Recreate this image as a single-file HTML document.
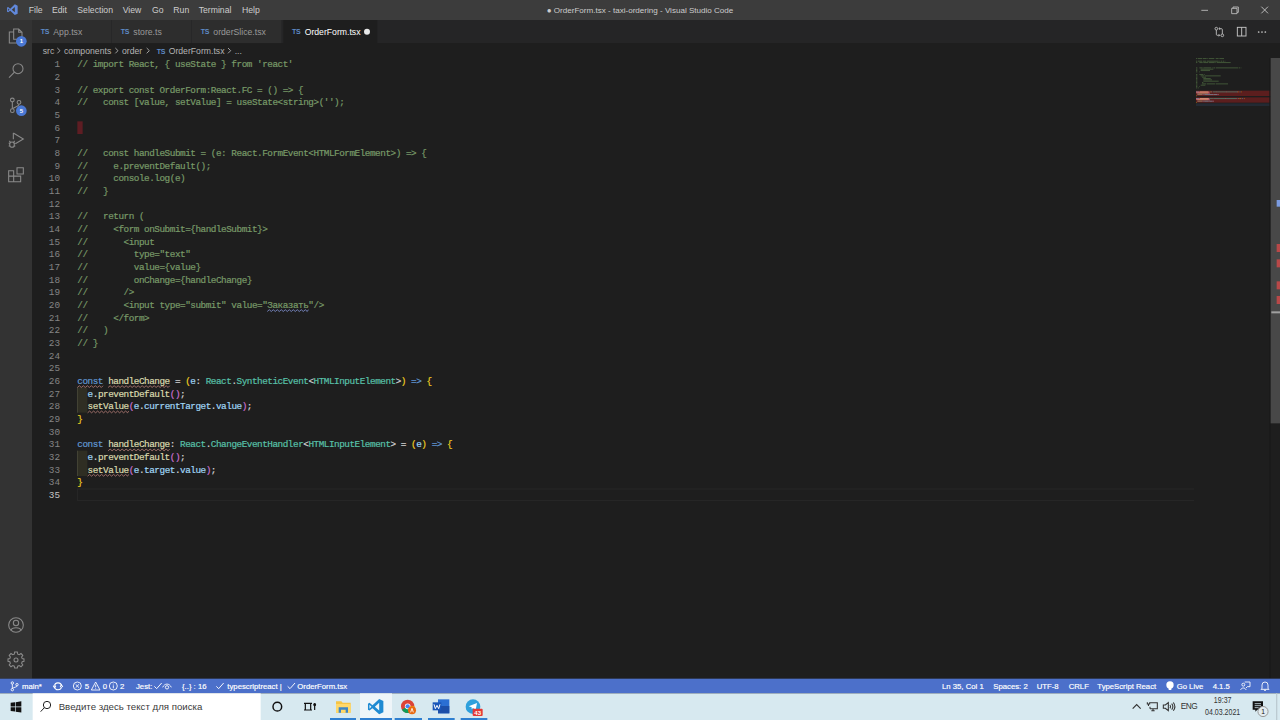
<!DOCTYPE html>
<html><head><meta charset="utf-8">
<style>
html,body{margin:0;padding:0;width:1280px;height:720px;overflow:hidden;background:#1e1e1e;}
#s{position:absolute;left:0;top:0;width:1920px;height:1080px;transform:scale(0.6666667);transform-origin:0 0;font-family:"Liberation Sans",sans-serif;overflow:hidden;background:#1e1e1e;}
.a{position:absolute;}
svg{position:absolute;overflow:visible;}
#title{left:0;top:0;width:1920px;height:30px;background:#3c3c3c;color:#cccccc;font-size:13px;}
.menu{position:absolute;top:0;line-height:32px;color:#cccccc;}
#act{left:0;top:30px;width:48px;height:988px;background:#333333;}
.badge{position:absolute;width:16px;height:16px;border-radius:50%;background:#4a78d4;color:#fff;font-size:9px;line-height:16px;text-align:center;font-weight:bold;}
#tabs{left:48px;top:30px;width:1872px;height:35px;background:#252526;}
.tab{position:absolute;top:0;height:35px;background:#2d2d2d;color:#9a9a9a;font-size:13px;line-height:36px;}
.ts{position:absolute;font-size:10.5px;font-weight:bold;color:#5f8ac6;letter-spacing:-0.3px;}
#bc{left:48px;top:65px;width:1872px;height:22px;background:#1e1e1e;color:#b4b4b4;font-size:13px;line-height:23px;}
#bc span{position:absolute;top:0;}
#ed{left:48px;top:87px;width:1872px;height:931px;background:#1e1e1e;}
.ln{position:absolute;left:0;width:42px;margin-top:0.5px;text-align:right;height:19px;line-height:19px;font-family:"Liberation Mono",monospace;font-size:14px;color:#858585;}
.ln.act{color:#c6c6c6;}
.cl{position:absolute;left:68px;margin-top:0.5px;height:19px;line-height:19px;font-family:"Liberation Mono",monospace;font-size:14px;letter-spacing:-0.7px;color:#d4d4d4;white-space:pre;-webkit-text-stroke:0.3px currentColor;}
.c{color:#789a68}.k{color:#6198d4}.f{color:#dadaae}.v{color:#a0d6f6}.t{color:#58c0a8}.y{color:#f0cf20}.p{color:#cc70d0}.w{color:#d4d4d4}
#status{left:0;top:1018px;width:1920px;height:22px;background:#4c70ca;color:#ffffff;font-size:11.6px;line-height:23.5px;}
#status span{position:absolute;top:0;white-space:pre;-webkit-text-stroke:0.25px #fff;}
#task{left:0;top:1040px;width:1920px;height:40px;background:#d7e9f0;}
</style></head><body>
<div id="s">
 <div id="title" class="a">
  <svg style="left:10px;top:6px" width="17" height="17" viewBox="0 0 16 16"><path d="M11.5 0.5 L15.5 2.4 V13.6 L11.5 15.5 L5 9.4 L2 11.8 L0.6 11 V5 L2 4.2 L5 6.6 Z M11.5 4.3 L7.3 8 L11.5 11.7 Z M2.1 6.2 V9.8 L4 8 Z" fill="#6189dc" fill-rule="evenodd"/></svg>
  <span class="menu" style="left:43px">File</span>
  <span class="menu" style="left:78px">Edit</span>
  <span class="menu" style="left:116px">Selection</span>
  <span class="menu" style="left:184px">View</span>
  <span class="menu" style="left:228px">Go</span>
  <span class="menu" style="left:260px">Run</span>
  <span class="menu" style="left:298px">Terminal</span>
  <span class="menu" style="left:363px">Help</span>
  <span class="menu" style="left:0;width:1920px;text-align:center;font-size:12.1px;line-height:33px">● OrderForm.tsx - taxi-ordering - Visual Studio Code</span>
  <svg style="left:1792px;top:0" width="30" height="30" viewBox="0 0 30 30"><path d="M10 15.5 H20" stroke="#cccccc" stroke-width="1.2"/></svg>
  <svg style="left:1837px;top:0" width="30" height="30" viewBox="0 0 30 30"><path d="M10.5 12.5 h8 v8 h-8 z M12.5 12.5 v-2 h8 v8 h-2" stroke="#cccccc" stroke-width="1.2" fill="none"/></svg>
  <svg style="left:1882px;top:0" width="30" height="30" viewBox="0 0 30 30"><path d="M10 10 L20 20 M20 10 L10 20" stroke="#cccccc" stroke-width="1.3"/></svg>
 </div>
 <div id="act" class="a">
  <svg style="left:12px;top:12px" width="24" height="24" viewBox="0 0 24 24" fill="none" stroke="#8a8a8a" stroke-width="1.6"><path d="M8.5 1.5 H16 L21 6.5 V17 H8.5 Z M16 1.5 V6.5 H21"/><path d="M8.5 6 H2 V22.5 H14 V17"/></svg>
  <div class="badge" style="left:24px;top:24px">1</div>
  <svg style="left:12px;top:64px" width="24" height="24" viewBox="0 0 24 24" fill="none" stroke="#8a8a8a" stroke-width="1.6"><circle cx="15" cy="9" r="7.5"/><path d="M9.7 14.3 L1.5 22.5"/></svg>
  <svg style="left:12px;top:116px" width="24" height="24" viewBox="0 0 24 24" fill="none" stroke="#8a8a8a" stroke-width="1.6"><circle cx="6.5" cy="4" r="2.8"/><circle cx="16.5" cy="7.5" r="2.8"/><circle cx="6.5" cy="20" r="2.8"/><path d="M6.5 6.8 V17.2 M16.5 10.3 C16.5 14 12 13.5 7 17"/></svg>
  <div class="badge" style="left:24px;top:128px">5</div>
  <svg style="left:12px;top:168px" width="24" height="24" viewBox="0 0 24 24" fill="none" stroke="#8a8a8a" stroke-width="1.6"><path d="M8 1.5 L23 10.5 L11 17.5"/><path d="M8 1.5 V11"/><ellipse cx="6" cy="19" rx="3.5" ry="4"/><path d="M1 17 H3 M1 21 H3 M9 17 H11 M9 21 H11 M3.5 15 L2 13.5 M8.5 15 L10 13.5"/></svg>
  <svg style="left:12px;top:220px" width="24" height="24" viewBox="0 0 24 24" fill="none" stroke="#8a8a8a" stroke-width="1.6"><path d="M1 6 H8.5 V22.5 H1 Z M1 14.2 H19 V22.5 H8.5"/><path d="M13.5 1.5 H23 V11 H13.5 Z"/></svg>
  <svg style="left:12px;top:895px" width="24" height="24" viewBox="0 0 24 24" fill="none" stroke="#8a8a8a" stroke-width="1.6"><circle cx="12" cy="12.5" r="11"/><circle cx="12" cy="9.5" r="4"/><path d="M4.5 20.5 C6 15.5 18 15.5 19.5 20.5"/></svg>
  <svg style="left:12px;top:948px" width="24" height="24" viewBox="0 0 24 24" fill="none" stroke="#8a8a8a" stroke-width="1.6"><path d="M10 1 H14 L14.6 4.2 L16.8 5.1 L19.5 3.3 L22.2 6 L20.4 8.7 L21.3 10.9 L24 11.5 V15 L21.3 15.6 L20.4 17.8 L22.2 20.5 L19.5 23.2 L16.8 21.4 L14.6 22.3 L14 25 H10 L9.4 22.3 L7.2 21.4 L4.5 23.2 L1.8 20.5 L3.6 17.8 L2.7 15.6 L0 15 V11.5 L2.7 10.9 L3.6 8.7 L1.8 6 L4.5 3.3 L7.2 5.1 L9.4 4.2 Z" transform="translate(0,-1) scale(1)"/><circle cx="12" cy="12" r="3"/></svg>
 </div>
 <div id="tabs" class="a">
  <div class="tab" style="left:0;width:119px"><span class="ts" style="left:13px;top:-1px">TS</span><span style="position:absolute;left:32px">App.tsx</span></div>
  <div class="tab" style="left:120px;width:119px"><span class="ts" style="left:13px;top:-1px">TS</span><span style="position:absolute;left:32px">store.ts</span></div>
  <div class="tab" style="left:240px;width:134px"><span class="ts" style="left:13px;top:-1px">TS</span><span style="position:absolute;left:32px">orderSlice.tsx</span></div>
  <div class="tab" style="left:377px;width:141px;background:#1e1e1e;color:#ffffff"><span class="ts" style="left:13px;top:-1px">TS</span><span style="position:absolute;left:32px">OrderForm.tsx</span><div style="position:absolute;left:121px;top:13px;width:9px;height:9px;border-radius:50%;background:#e8e8e8"></div></div>
  <svg style="left:1773px;top:10px" width="16" height="16" viewBox="0 0 16 16" fill="none" stroke="#c5c5c5" stroke-width="1.3"><circle cx="3.5" cy="3" r="2"/><circle cx="12.5" cy="13" r="2"/><path d="M3.5 5 V11.5 Q3.5 13 5 13 H8.5 M7 11.3 L8.7 13 L7 14.7 M12.5 11 V4.5 Q12.5 3 11 3 H7.5 M9 1.3 L7.3 3 L9 4.7"/></svg>
  <svg style="left:1807px;top:10px" width="16" height="16" viewBox="0 0 16 16" fill="none" stroke="#c5c5c5" stroke-width="1.4"><rect x="1" y="1" width="13" height="13"/><path d="M7.5 1 V14"/></svg>
  <svg style="left:1838px;top:10px" width="16" height="16" viewBox="0 0 16 16" fill="#c5c5c5"><circle cx="2" cy="8" r="1.3"/><circle cx="7" cy="8" r="1.3"/><circle cx="12" cy="8" r="1.3"/></svg>
 </div>
 <div id="bc" class="a">
  <span style="left:16px">src</span>
  <span style="left:48px">components</span>
  <span style="left:135px">order</span>
  <span class="ts" style="left:187px;top:1px;line-height:22px">TS</span>
  <span style="left:205px">OrderForm.tsx</span>
  <span style="left:304px">...</span>
  <svg style="left:33px;top:4px" width="14" height="14" viewBox="0 0 14 14" fill="none" stroke="#b4b4b4" stroke-width="1.3"><path d="M5 3 L9 7 L5 11"/></svg>
  <svg style="left:120px;top:4px" width="14" height="14" viewBox="0 0 14 14" fill="none" stroke="#b4b4b4" stroke-width="1.3"><path d="M5 3 L9 7 L5 11"/></svg>
  <svg style="left:167px;top:4px" width="14" height="14" viewBox="0 0 14 14" fill="none" stroke="#b4b4b4" stroke-width="1.3"><path d="M5 3 L9 7 L5 11"/></svg>
  <svg style="left:289px;top:4px" width="14" height="14" viewBox="0 0 14 14" fill="none" stroke="#b4b4b4" stroke-width="1.3"><path d="M5 3 L9 7 L5 11"/></svg>
 </div>
<div id="ed" class="a">
<div class="a" style="left:68px;top:95px;width:8px;height:19px;background:#5e1d23"></div>
<div class="a" style="left:68px;top:494px;width:15px;height:38px;background:#2f2e23;border-left:1.5px solid #505040;box-sizing:border-box"></div>
<div class="a" style="left:68px;top:589px;width:15px;height:38px;background:#2f2e23;border-left:1.5px solid #505040;box-sizing:border-box"></div>
<div class="a" style="left:68px;top:646px;width:1674px;height:16px;border:1.5px solid #2b2b2b;border-right:none"></div>
<svg style="left:0;top:0" width="1" height="1" overflow="visible"><path d="M68.0 494.20000000000005 L71.0 491.6 L74.0 494.20000000000005 L77.0 491.6 L80.0 494.20000000000005 L83.0 491.6 L86.0 494.20000000000005 L89.0 491.6 L92.0 494.20000000000005 L95.0 491.6 L98.0 494.20000000000005 L101.0 491.6 L104.0 494.20000000000005 L106.5 491.6" stroke="#b07a74" stroke-width="1.3" fill="none"/></svg>
<svg style="left:0;top:0" width="1" height="1" overflow="visible"><path d="M114.2 494.20000000000005 L117.2 491.6 L120.2 494.20000000000005 L123.2 491.6 L126.2 494.20000000000005 L129.2 491.6 L132.2 494.20000000000005 L135.2 491.6 L138.2 494.20000000000005 L141.2 491.6 L144.2 494.20000000000005 L147.2 491.6 L150.2 494.20000000000005 L153.2 491.6 L156.2 494.20000000000005 L159.2 491.6 L162.2 494.20000000000005 L165.2 491.6 L168.2 494.20000000000005 L171.2 491.6 L174.2 494.20000000000005 L177.2 491.6 L180.2 494.20000000000005 L183.2 491.6 L186.2 494.20000000000005 L189.2 491.6 L192.2 494.20000000000005 L195.2 491.6 L198.2 494.20000000000005 L201.2 491.6 L204.2 494.20000000000005 L206.6 491.6" stroke="#b07a74" stroke-width="1.3" fill="none"/></svg>
<svg style="left:0;top:0" width="1" height="1" overflow="visible"><path d="M83.4 532.2 L86.4 529.6 L89.4 532.2 L92.4 529.6 L95.4 532.2 L98.4 529.6 L101.4 532.2 L104.4 529.6 L107.4 532.2 L110.4 529.6 L113.4 532.2 L116.4 529.6 L119.4 532.2 L122.4 529.6 L125.4 532.2 L128.4 529.6 L131.4 532.2 L134.4 529.6 L137.4 532.2 L140.4 529.6 L143.4 532.2 L145.0 529.6" stroke="#b07a74" stroke-width="1.3" fill="none"/></svg>
<svg style="left:0;top:0" width="1" height="1" overflow="visible"><path d="M114.2 589.2 L117.2 586.6 L120.2 589.2 L123.2 586.6 L126.2 589.2 L129.2 586.6 L132.2 589.2 L135.2 586.6 L138.2 589.2 L141.2 586.6 L144.2 589.2 L147.2 586.6 L150.2 589.2 L153.2 586.6 L156.2 589.2 L159.2 586.6 L162.2 589.2 L165.2 586.6 L168.2 589.2 L171.2 586.6 L174.2 589.2 L177.2 586.6 L180.2 589.2 L183.2 586.6 L186.2 589.2 L189.2 586.6 L192.2 589.2 L195.2 586.6 L198.2 589.2 L201.2 586.6 L204.2 589.2 L206.6 586.6" stroke="#b07a74" stroke-width="1.3" fill="none"/></svg>
<svg style="left:0;top:0" width="1" height="1" overflow="visible"><path d="M83.4 627.2 L86.4 624.6 L89.4 627.2 L92.4 624.6 L95.4 627.2 L98.4 624.6 L101.4 627.2 L104.4 624.6 L107.4 627.2 L110.4 624.6 L113.4 627.2 L116.4 624.6 L119.4 627.2 L122.4 624.6 L125.4 627.2 L128.4 624.6 L131.4 627.2 L134.4 624.6 L137.4 627.2 L140.4 624.6 L143.4 627.2 L145.0 624.6" stroke="#b07a74" stroke-width="1.3" fill="none"/></svg>
<svg style="left:0;top:0" width="1" height="1" overflow="visible"><path d="M352.9 380.20000000000005 L355.9 377.6 L358.9 380.20000000000005 L361.9 377.6 L364.9 380.20000000000005 L367.9 377.6 L370.9 380.20000000000005 L373.9 377.6 L376.9 380.20000000000005 L379.9 377.6 L382.9 380.20000000000005 L385.9 377.6 L388.9 380.20000000000005 L391.9 377.6 L394.9 380.20000000000005 L397.9 377.6 L400.9 380.20000000000005 L403.9 377.6 L406.9 380.20000000000005 L409.9 377.6 L412.9 380.20000000000005 L414.5 377.6" stroke="#8090d0" stroke-width="1.3" fill="none"/></svg>
<div class="ln" style="top:0px">1</div>
<div class="cl" style="top:0px"><span class="c">// import React, { useState } from &#x27;react&#x27;</span></div>
<div class="ln" style="top:19px">2</div>
<div class="ln" style="top:38px">3</div>
<div class="cl" style="top:38px"><span class="c">// export const OrderForm:React.FC = () =&gt; {</span></div>
<div class="ln" style="top:57px">4</div>
<div class="cl" style="top:57px"><span class="c">//   const [value, setValue] = useState&lt;string&gt;(&#x27;&#x27;);</span></div>
<div class="ln" style="top:76px">5</div>
<div class="ln" style="top:95px">6</div>
<div class="ln" style="top:114px">7</div>
<div class="ln" style="top:133px">8</div>
<div class="cl" style="top:133px"><span class="c">//   const handleSubmit = (e: React.FormEvent&lt;HTMLFormElement&gt;) =&gt; {</span></div>
<div class="ln" style="top:152px">9</div>
<div class="cl" style="top:152px"><span class="c">//     e.preventDefault();</span></div>
<div class="ln" style="top:171px">10</div>
<div class="cl" style="top:171px"><span class="c">//     console.log(e)</span></div>
<div class="ln" style="top:190px">11</div>
<div class="cl" style="top:190px"><span class="c">//   }</span></div>
<div class="ln" style="top:209px">12</div>
<div class="ln" style="top:228px">13</div>
<div class="cl" style="top:228px"><span class="c">//   return (</span></div>
<div class="ln" style="top:247px">14</div>
<div class="cl" style="top:247px"><span class="c">//     &lt;form onSubmit={handleSubmit}&gt;</span></div>
<div class="ln" style="top:266px">15</div>
<div class="cl" style="top:266px"><span class="c">//       &lt;input</span></div>
<div class="ln" style="top:285px">16</div>
<div class="cl" style="top:285px"><span class="c">//         type=&quot;text&quot;</span></div>
<div class="ln" style="top:304px">17</div>
<div class="cl" style="top:304px"><span class="c">//         value={value}</span></div>
<div class="ln" style="top:323px">18</div>
<div class="cl" style="top:323px"><span class="c">//         onChange={handleChange}</span></div>
<div class="ln" style="top:342px">19</div>
<div class="cl" style="top:342px"><span class="c">//       /&gt;</span></div>
<div class="ln" style="top:361px">20</div>
<div class="cl" style="top:361px"><span class="c">//       &lt;input type=&quot;submit&quot; value=&quot;Заказать&quot;/&gt;</span></div>
<div class="ln" style="top:380px">21</div>
<div class="cl" style="top:380px"><span class="c">//     &lt;/form&gt;</span></div>
<div class="ln" style="top:399px">22</div>
<div class="cl" style="top:399px"><span class="c">//   )</span></div>
<div class="ln" style="top:418px">23</div>
<div class="cl" style="top:418px"><span class="c">// }</span></div>
<div class="ln" style="top:437px">24</div>
<div class="ln" style="top:456px">25</div>
<div class="ln" style="top:475px">26</div>
<div class="cl" style="top:475px"><span class="k">const</span><span class="w"> </span><span class="f">handleChange</span><span class="w"> = </span><span class="y">(</span><span class="v">e</span><span class="w">: </span><span class="t">React</span><span class="w">.</span><span class="t">SyntheticEvent</span><span class="w">&lt;</span><span class="t">HTMLInputElement</span><span class="w">&gt;</span><span class="y">)</span><span class="w"> </span><span class="k">=&gt;</span><span class="w"> </span><span class="y">{</span></div>
<div class="ln" style="top:494px">27</div>
<div class="cl" style="top:494px"><span class="w">  </span><span class="v">e</span><span class="w">.</span><span class="f">preventDefault</span><span class="p">()</span><span class="w">;</span></div>
<div class="ln" style="top:513px">28</div>
<div class="cl" style="top:513px"><span class="w">  </span><span class="f">setValue</span><span class="p">(</span><span class="v">e</span><span class="w">.</span><span class="v">currentTarget</span><span class="w">.</span><span class="v">value</span><span class="p">)</span><span class="w">;</span></div>
<div class="ln" style="top:532px">29</div>
<div class="cl" style="top:532px"><span class="y">}</span></div>
<div class="ln" style="top:551px">30</div>
<div class="ln" style="top:570px">31</div>
<div class="cl" style="top:570px"><span class="k">const</span><span class="w"> </span><span class="f">handleChange</span><span class="w">: </span><span class="t">React</span><span class="w">.</span><span class="t">ChangeEventHandler</span><span class="w">&lt;</span><span class="t">HTMLInputElement</span><span class="w">&gt; = </span><span class="y">(</span><span class="v">e</span><span class="y">)</span><span class="w"> </span><span class="k">=&gt;</span><span class="w"> </span><span class="y">{</span></div>
<div class="ln" style="top:589px">32</div>
<div class="cl" style="top:589px"><span class="w">  </span><span class="v">e</span><span class="w">.</span><span class="f">preventDefault</span><span class="p">()</span><span class="w">;</span></div>
<div class="ln" style="top:608px">33</div>
<div class="cl" style="top:608px"><span class="w">  </span><span class="f">setValue</span><span class="p">(</span><span class="v">e</span><span class="w">.</span><span class="v">target</span><span class="w">.</span><span class="v">value</span><span class="p">)</span><span class="w">;</span></div>
<div class="ln" style="top:627px">34</div>
<div class="cl" style="top:627px"><span class="y">}</span></div>
<div class="ln act" style="top:646px">35</div>
<div class="a" style="left:1746px;top:49px;width:112px;height:8px;background:#5c1e1e"></div>
<div class="a" style="left:1746px;top:59px;width:112px;height:8px;background:#5c1e1e"></div>
<div class="a" style="left:1746px;top:50px;width:20px;height:3px;background:#c0504a"></div>
<div class="a" style="left:1746px;top:60px;width:20px;height:3px;background:#c0504a"></div>
<div class="a" style="left:1746px;top:68px;width:112px;height:4px;background:#232a33"></div>
<div class="a" style="left:1856px;top:0;width:2px;height:931px;background:#1a1a1a"></div>
<div class="a" style="left:1858px;top:0;width:14px;height:548px;background:#484848"></div>
<div class="a" style="left:1867px;top:213px;width:5px;height:10px;background:#7b9be0"></div>
<div class="a" style="left:1867px;top:279px;width:5px;height:12px;background:#b84848"></div>
<div class="a" style="left:1867px;top:302px;width:5px;height:12px;background:#b84848"></div>
<div class="a" style="left:1867px;top:335px;width:5px;height:12px;background:#b84848"></div>
<div class="a" style="left:1867px;top:357px;width:5px;height:12px;background:#b84848"></div>
<div class="a" style="left:1859px;top:380px;width:13px;height:3px;background:#a0a0a0"></div>

<svg style="left:1746px;top:0" width="112" height="80" viewBox="0 0 112 80" opacity="0.42"><rect x="0" y="0" width="2" height="1.6" fill="#6a9955"/><rect x="3" y="0" width="6" height="1.6" fill="#6a9955"/><rect x="10" y="0" width="6" height="1.6" fill="#6a9955"/><rect x="17" y="0" width="1" height="1.6" fill="#6a9955"/><rect x="19" y="0" width="8" height="1.6" fill="#6a9955"/><rect x="28" y="0" width="1" height="1.6" fill="#6a9955"/><rect x="30" y="0" width="4" height="1.6" fill="#6a9955"/><rect x="35" y="0" width="7" height="1.6" fill="#6a9955"/><rect x="0" y="4" width="2" height="1.6" fill="#6a9955"/><rect x="3" y="4" width="6" height="1.6" fill="#6a9955"/><rect x="10" y="4" width="5" height="1.6" fill="#6a9955"/><rect x="16" y="4" width="18" height="1.6" fill="#6a9955"/><rect x="35" y="4" width="1" height="1.6" fill="#6a9955"/><rect x="37" y="4" width="2" height="1.6" fill="#6a9955"/><rect x="40" y="4" width="2" height="1.6" fill="#6a9955"/><rect x="43" y="4" width="1" height="1.6" fill="#6a9955"/><rect x="0" y="6" width="2" height="1.6" fill="#6a9955"/><rect x="5" y="6" width="5" height="1.6" fill="#6a9955"/><rect x="11" y="6" width="7" height="1.6" fill="#6a9955"/><rect x="19" y="6" width="9" height="1.6" fill="#6a9955"/><rect x="29" y="6" width="1" height="1.6" fill="#6a9955"/><rect x="31" y="6" width="21" height="1.6" fill="#6a9955"/><rect x="0" y="14" width="2" height="1.6" fill="#6a9955"/><rect x="5" y="14" width="5" height="1.6" fill="#6a9955"/><rect x="11" y="14" width="12" height="1.6" fill="#6a9955"/><rect x="24" y="14" width="1" height="1.6" fill="#6a9955"/><rect x="26" y="14" width="3" height="1.6" fill="#6a9955"/><rect x="30" y="14" width="33" height="1.6" fill="#6a9955"/><rect x="64" y="14" width="2" height="1.6" fill="#6a9955"/><rect x="67" y="14" width="1" height="1.6" fill="#6a9955"/><rect x="0" y="16" width="2" height="1.6" fill="#6a9955"/><rect x="7" y="16" width="19" height="1.6" fill="#6a9955"/><rect x="0" y="18" width="2" height="1.6" fill="#6a9955"/><rect x="7" y="18" width="14" height="1.6" fill="#6a9955"/><rect x="0" y="20" width="2" height="1.6" fill="#6a9955"/><rect x="5" y="20" width="1" height="1.6" fill="#6a9955"/><rect x="0" y="24" width="2" height="1.6" fill="#6a9955"/><rect x="5" y="24" width="6" height="1.6" fill="#6a9955"/><rect x="12" y="24" width="1" height="1.6" fill="#6a9955"/><rect x="0" y="26" width="2" height="1.6" fill="#6a9955"/><rect x="7" y="26" width="5" height="1.6" fill="#6a9955"/><rect x="13" y="26" width="24" height="1.6" fill="#6a9955"/><rect x="0" y="28" width="2" height="1.6" fill="#6a9955"/><rect x="9" y="28" width="6" height="1.6" fill="#6a9955"/><rect x="0" y="30" width="2" height="1.6" fill="#6a9955"/><rect x="11" y="30" width="11" height="1.6" fill="#6a9955"/><rect x="0" y="32" width="2" height="1.6" fill="#6a9955"/><rect x="11" y="32" width="13" height="1.6" fill="#6a9955"/><rect x="0" y="34" width="2" height="1.6" fill="#6a9955"/><rect x="11" y="34" width="23" height="1.6" fill="#6a9955"/><rect x="0" y="36" width="2" height="1.6" fill="#6a9955"/><rect x="9" y="36" width="2" height="1.6" fill="#6a9955"/><rect x="0" y="38" width="2" height="1.6" fill="#6a9955"/><rect x="9" y="38" width="6" height="1.6" fill="#6a9955"/><rect x="16" y="38" width="13" height="1.6" fill="#6a9955"/><rect x="30" y="38" width="18" height="1.6" fill="#6a9955"/><rect x="0" y="40" width="2" height="1.6" fill="#6a9955"/><rect x="7" y="40" width="7" height="1.6" fill="#6a9955"/><rect x="0" y="42" width="2" height="1.6" fill="#6a9955"/><rect x="5" y="42" width="1" height="1.6" fill="#6a9955"/><rect x="0" y="44" width="2" height="1.6" fill="#6a9955"/><rect x="3" y="44" width="1" height="1.6" fill="#6a9955"/><rect x="0" y="50" width="5" height="1.6" fill="#569cd6"/><rect x="6" y="50" width="12" height="1.6" fill="#dcdcaa"/><rect x="19" y="50" width="1" height="1.6" fill="#d4d4d4"/><rect x="21" y="50" width="1" height="1.6" fill="#ffd700"/><rect x="22" y="50" width="1" height="1.6" fill="#9cdcfe"/><rect x="23" y="50" width="1" height="1.6" fill="#d4d4d4"/><rect x="25" y="50" width="5" height="1.6" fill="#4ec9b0"/><rect x="30" y="50" width="1" height="1.6" fill="#d4d4d4"/><rect x="31" y="50" width="14" height="1.6" fill="#4ec9b0"/><rect x="45" y="50" width="1" height="1.6" fill="#d4d4d4"/><rect x="46" y="50" width="16" height="1.6" fill="#4ec9b0"/><rect x="62" y="50" width="1" height="1.6" fill="#d4d4d4"/><rect x="63" y="50" width="1" height="1.6" fill="#ffd700"/><rect x="65" y="50" width="2" height="1.6" fill="#569cd6"/><rect x="68" y="50" width="1" height="1.6" fill="#ffd700"/><rect x="2" y="52" width="1" height="1.6" fill="#9cdcfe"/><rect x="3" y="52" width="1" height="1.6" fill="#d4d4d4"/><rect x="4" y="52" width="14" height="1.6" fill="#dcdcaa"/><rect x="18" y="52" width="2" height="1.6" fill="#da70d6"/><rect x="20" y="52" width="1" height="1.6" fill="#d4d4d4"/><rect x="2" y="54" width="8" height="1.6" fill="#dcdcaa"/><rect x="10" y="54" width="1" height="1.6" fill="#da70d6"/><rect x="11" y="54" width="1" height="1.6" fill="#9cdcfe"/><rect x="12" y="54" width="1" height="1.6" fill="#d4d4d4"/><rect x="13" y="54" width="13" height="1.6" fill="#9cdcfe"/><rect x="26" y="54" width="1" height="1.6" fill="#d4d4d4"/><rect x="27" y="54" width="5" height="1.6" fill="#9cdcfe"/><rect x="32" y="54" width="1" height="1.6" fill="#da70d6"/><rect x="33" y="54" width="1" height="1.6" fill="#d4d4d4"/><rect x="0" y="56" width="1" height="1.6" fill="#ffd700"/><rect x="0" y="60" width="5" height="1.6" fill="#569cd6"/><rect x="6" y="60" width="12" height="1.6" fill="#dcdcaa"/><rect x="18" y="60" width="1" height="1.6" fill="#d4d4d4"/><rect x="20" y="60" width="5" height="1.6" fill="#4ec9b0"/><rect x="25" y="60" width="1" height="1.6" fill="#d4d4d4"/><rect x="26" y="60" width="18" height="1.6" fill="#4ec9b0"/><rect x="44" y="60" width="1" height="1.6" fill="#d4d4d4"/><rect x="45" y="60" width="16" height="1.6" fill="#4ec9b0"/><rect x="61" y="60" width="1" height="1.6" fill="#d4d4d4"/><rect x="63" y="60" width="1" height="1.6" fill="#d4d4d4"/><rect x="65" y="60" width="1" height="1.6" fill="#ffd700"/><rect x="66" y="60" width="1" height="1.6" fill="#9cdcfe"/><rect x="67" y="60" width="1" height="1.6" fill="#ffd700"/><rect x="69" y="60" width="2" height="1.6" fill="#569cd6"/><rect x="72" y="60" width="1" height="1.6" fill="#ffd700"/><rect x="2" y="62" width="1" height="1.6" fill="#9cdcfe"/><rect x="3" y="62" width="1" height="1.6" fill="#d4d4d4"/><rect x="4" y="62" width="14" height="1.6" fill="#dcdcaa"/><rect x="18" y="62" width="2" height="1.6" fill="#da70d6"/><rect x="20" y="62" width="1" height="1.6" fill="#d4d4d4"/><rect x="2" y="64" width="8" height="1.6" fill="#dcdcaa"/><rect x="10" y="64" width="1" height="1.6" fill="#da70d6"/><rect x="11" y="64" width="1" height="1.6" fill="#9cdcfe"/><rect x="12" y="64" width="1" height="1.6" fill="#d4d4d4"/><rect x="13" y="64" width="6" height="1.6" fill="#9cdcfe"/><rect x="19" y="64" width="1" height="1.6" fill="#d4d4d4"/><rect x="20" y="64" width="5" height="1.6" fill="#9cdcfe"/><rect x="25" y="64" width="1" height="1.6" fill="#da70d6"/><rect x="26" y="64" width="1" height="1.6" fill="#d4d4d4"/><rect x="0" y="66" width="1" height="1.6" fill="#ffd700"/></svg>
</div>
 <div id="status" class="a">
  <svg style="left:15px;top:4px" width="14" height="15" viewBox="0 0 14 15" fill="none" stroke="#fff" stroke-width="1.3"><circle cx="3.5" cy="2.5" r="1.8"/><circle cx="3.5" cy="12.5" r="1.8"/><circle cx="10.5" cy="5" r="1.8"/><path d="M3.5 4.3 V10.7 M10.5 6.8 C10.5 9 6 8.5 3.5 10.7"/></svg>
  <span style="left:33px">main*</span>
  <svg style="left:79px;top:3px" width="16" height="16" viewBox="0 0 16 16" fill="none" stroke="#fff" stroke-width="1.6"><circle cx="8" cy="8.5" r="5.2"/><path d="M0.8 7.5 L2.8 10.5 L4.8 7.5 M11.2 9.5 L13.2 6.5 L15.2 9.5" fill="#4c70ca"/></svg>
  <svg style="left:109px;top:4px" width="14" height="14" viewBox="0 0 14 14" fill="none" stroke="#fff" stroke-width="1.3"><circle cx="7" cy="7" r="6"/><path d="M4.5 4.5 L9.5 9.5 M9.5 4.5 L4.5 9.5"/></svg>
  <span style="left:127px">5</span>
  <svg style="left:136px;top:4px" width="15" height="14" viewBox="0 0 15 14" fill="none" stroke="#fff" stroke-width="1.3"><path d="M7.5 1 L14 13 H1 Z M7.5 5 V9 M7.5 10.5 V11.5"/></svg>
  <span style="left:154px">0</span>
  <svg style="left:163px;top:4px" width="14" height="14" viewBox="0 0 14 14" fill="none" stroke="#fff" stroke-width="1.3"><circle cx="7" cy="7" r="6"/><path d="M7 6 V10.5 M7 3.5 V4.7"/></svg>
  <span style="left:180px">2</span>
  <span style="left:204px">Jest:</span>
  <svg style="left:230px;top:4px" width="14" height="14" viewBox="0 0 14 14" fill="none" stroke="#fff" stroke-width="1.4"><path d="M1.5 7.5 L5 11 L12.5 2.5"/></svg>
  <svg style="left:243px;top:4px" width="15" height="14" viewBox="0 0 15 14" fill="none" stroke="#fff" stroke-width="1.3"><path d="M1 9 C4 2.5 11 2.5 14 9"/><circle cx="7.5" cy="9" r="2.5"/></svg>
  <span style="left:273px">{..} : 16</span>
  <svg style="left:323px;top:4px" width="14" height="14" viewBox="0 0 14 14" fill="none" stroke="#fff" stroke-width="1.4"><path d="M1.5 7.5 L5 11 L12.5 2.5"/></svg>
  <span style="left:341px">typescriptreact | </span>
  <svg style="left:430px;top:4px" width="14" height="14" viewBox="0 0 14 14" fill="none" stroke="#fff" stroke-width="1.4"><path d="M1.5 7.5 L5 11 L12.5 2.5"/></svg>
  <span style="left:446px">OrderForm.tsx</span>
  <span style="left:1413px">Ln 35, Col 1</span>
  <span style="left:1490px">Spaces: 2</span>
  <span style="left:1555px">UTF-8</span>
  <span style="left:1603px">CRLF</span>
  <span style="left:1646px">TypeScript React</span>
  <svg style="left:1749px;top:4px" width="12" height="14" viewBox="0 0 12 14" fill="#fff"><circle cx="6" cy="5.5" r="5.5"/><rect x="4" y="10" width="4" height="3"/></svg>
  <span style="left:1765px">Go Live</span>
  <span style="left:1819px">4.1.5</span>
  <svg style="left:1860px;top:3px" width="16" height="16" viewBox="0 0 16 16" fill="none" stroke="#fff" stroke-width="1.3"><circle cx="5" cy="6" r="2.2"/><path d="M1 14 C1.5 10 8.5 10 9 14 M7 2 H15 V9 H11 L9 11"/></svg>
  <svg style="left:1890px;top:3px" width="15" height="16" viewBox="0 0 15 16" fill="none" stroke="#fff" stroke-width="1.3"><path d="M3 11.5 V6.5 A4.5 4.5 0 0 1 12 6.5 V11.5 L13.5 13 H1.5 Z M6 14.5 H9"/></svg>
 </div>
 <div id="task" class="a">
  <svg style="left:16px;top:12px" width="16" height="17" viewBox="0 0 16 17" fill="#111"><path d="M0 2.3 L6.5 1.4 V7.8 H0 Z M7.5 1.2 L16 0 V7.8 H7.5 Z M0 8.8 H6.5 V15.3 L0 14.4 Z M7.5 8.8 H16 V16.7 L7.5 15.5 Z"/></svg>
  <div class="a" style="left:49px;top:0;width:342px;height:40px;background:#ffffff"></div>
  <svg style="left:60px;top:11px" width="17" height="18" viewBox="0 0 17 18" fill="none" stroke="#222" stroke-width="1.5"><circle cx="10.5" cy="6.5" r="5.5"/><path d="M6.5 10.5 L1 16.5"/></svg>
  <span class="a" style="left:88px;top:0;line-height:41px;font-size:14.5px;color:#3a3a3a">Введите здесь текст для поиска</span>
  <svg style="left:405px;top:9px" width="22" height="22" viewBox="0 0 22 22" fill="none" stroke="#111" stroke-width="2.2"><circle cx="11" cy="11" r="6.5"/></svg>
  <svg style="left:455px;top:12px" width="18" height="16" viewBox="0 0 18 16" fill="none" stroke="#111" stroke-width="1.8"><path d="M1 3 H13 M1 13 H13 M3 3 V13 M11 3 V13 M17 3 V13"/><circle cx="17" cy="5" r="1.3" fill="#111"/></svg>
  <svg style="left:504px;top:10px" width="22" height="20" viewBox="0 0 22 20"><path d="M0 2 H8 L10 4 H22 V19 H0 Z" fill="#f6c445"/><path d="M0 6 H22 V19 H0 Z" fill="#ffd86a"/><path d="M4 19 V11 H18 V19 H14.5 V14.5 H7.5 V19 Z" fill="#3d85c6"/></svg>
  <div class="a" style="left:540px;top:0;width:48px;height:40px;background:#eef5f9"></div>
  <svg style="left:551px;top:8px" width="25" height="24" viewBox="0 0 16 16"><path d="M11.5 0.3 L15.7 2.3 V13.7 L11.5 15.7 L4.8 9.5 L1.8 11.8 L0.3 11 V5 L1.8 4.2 L4.8 6.5 Z M11.5 4.2 L7.2 8 L11.5 11.8 Z M1.8 6 V10 L3.8 8 Z" fill="#1f8ad2" fill-rule="evenodd"/></svg>
  <svg style="left:601px;top:9px" width="23" height="23" viewBox="0 0 23 23"><circle cx="10.5" cy="10.5" r="10" fill="#db4437"/><path d="M10.5 10.5 L1.8 15.5 A10 10 0 0 0 14 20 Z" fill="#0f9d58"/><path d="M10.5 10.5 L14 20 A10 10 0 0 0 20.5 10 Z" fill="#f4b400"/><circle cx="10.5" cy="10.5" r="4.2" fill="#fff"/><circle cx="10.5" cy="10.5" r="3.2" fill="#4285f4"/><circle cx="17" cy="16.5" r="6" fill="#e96a12"/><path d="M15 19.5 L17 13.5 L19 19.5" stroke="#fff" stroke-width="1.3" fill="none"/></svg>
  <svg style="left:649px;top:9px" width="26" height="23" viewBox="0 0 26 23"><rect x="8" y="0" width="17" height="21" fill="#2b6fd3"/><rect x="8" y="10" width="17" height="11" fill="#1d4fa8"/><rect x="0" y="4.5" width="13" height="12" fill="#1a56b8"/><path d="M2 7.5 L4 14 L6.5 9 L9 14 L11 7.5" stroke="#fff" stroke-width="1.5" fill="none"/></svg>
  <svg style="left:698px;top:9px" width="28" height="26" viewBox="0 0 28 26"><circle cx="11.5" cy="11" r="11" fill="#2ea0dc"/><path d="M5 10.5 L17.5 5.5 L15.5 16 L11.5 13 L9.5 15 L9.5 12 Z" fill="#fff"/><rect x="11" y="14" width="15" height="11" rx="1.5" fill="#e53935"/><text x="18.5" y="23" font-size="9" fill="#fff" text-anchor="middle" font-family="Liberation Sans" font-weight="bold">43</text></svg>
  <div class="a" style="left:495px;top:37px;width:39px;height:3px;background:#2f7fd0"></div>
  <div class="a" style="left:540px;top:37px;width:48px;height:3px;background:#2f7fd0"></div>
  <div class="a" style="left:592px;top:37px;width:41px;height:3px;background:#2f7fd0"></div>
  <div class="a" style="left:642px;top:37px;width:40px;height:3px;background:#2f7fd0"></div>
  <div class="a" style="left:691px;top:37px;width:40px;height:3px;background:#2f7fd0"></div>
  <svg style="left:1698px;top:15px" width="14" height="9" viewBox="0 0 14 9" fill="none" stroke="#333" stroke-width="1.7"><path d="M1 8 L7 2 L13 8"/></svg>
  <svg style="left:1720px;top:12px" width="17" height="15" viewBox="0 0 17 15" fill="none" stroke="#333" stroke-width="1.6"><path d="M5 2 H16 V11 H5 M1 1.5 V4 H4.5 V1.5 M2.7 4 V7 M5 8 V11 M7 14 H12 M9.5 11 V14"/></svg>
  <svg style="left:1744px;top:13px" width="18" height="14" viewBox="0 0 18 14" fill="none" stroke="#333" stroke-width="1.6"><path d="M1 4.5 H4 L8.5 1 V13 L4 9.5 H1 Z M11 4.5 C12 6 12 8 11 9.5 M13.5 2.5 C15.5 5 15.5 9 13.5 11.5 M16 0.8 C18.8 4.5 18.8 9.5 16 13.2"/></svg>
  <span class="a" style="left:1771px;top:0;line-height:39px;font-size:12.5px;color:#333;letter-spacing:-0.7px">ENG</span>
  <span class="a" style="left:1806px;top:2px;line-height:16px;font-size:13.2px;color:#333;width:56px;text-align:center;transform:scaleX(0.8)">19:37</span>
  <span class="a" style="left:1794px;top:20px;line-height:16px;font-size:13.2px;color:#333;width:80px;text-align:center;transform:scaleX(0.8)">04.03.2021</span>
  <svg style="left:1878px;top:11px" width="28" height="26" viewBox="0 0 28 26"><path d="M1 1 H16.5 V13.5 H8 L5 16.5 V13.5 H1 Z" fill="#111"/><path d="M4 4.5 H13.5 M4 7.5 H13.5 M4 10.5 H10" stroke="#d5e8f1" stroke-width="1.2"/><circle cx="16.5" cy="16.3" r="7.6" fill="#e3ecf0" stroke="#999" stroke-width="1.5"/><text x="16.5" y="20.3" font-size="10" fill="#111" text-anchor="middle" font-family="Liberation Sans">1</text></svg>
  <div class="a" style="left:1914px;top:0;width:1.5px;height:40px;background:#bccbd2"></div>
 </div>
</div>
</body></html>
